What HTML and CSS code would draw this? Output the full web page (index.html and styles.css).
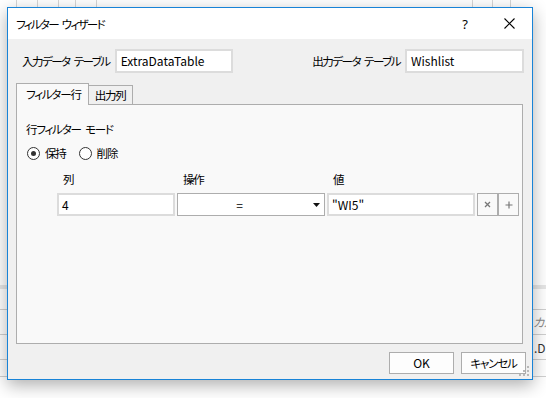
FILE: index.html
```html
<!DOCTYPE html>
<html lang="ja">
<head>
<meta charset="utf-8">
<title>フィルター ウィザード</title>
<link rel="stylesheet" href="styles.css">
</head>
<body>
<div class="desk">
  <div class="bg-clip bg-c1"><span class="bg-text bg-t1">カル</span></div>
  <div class="bg-clip bg-c2"><span class="bg-text bg-t2">.D</span></div>
  <div class="dialog">
    <div class="titlebar">
      <span class="title">フィルター ウィザード</span>
      <span class="tb-btn help">?</span>
      <span class="tb-btn close"><svg width="11" height="11" viewBox="0 0 11 11"><path d="M0.5 0.5 L10.5 10.5 M10.5 0.5 L0.5 10.5" stroke="#000" stroke-width="1.1" fill="none"/></svg></span>
    </div>
    <div class="tables">
      <div class="field">
        <span class="lbl">入力データ テーブル</span>
        <span class="textbox tb-in">ExtraDataTable</span>
      </div>
      <div class="field">
        <span class="lbl">出力データ テーブル</span>
        <span class="textbox tb-out">Wishlist</span>
      </div>
    </div>
    <div class="tabs">
      <div class="tab active">フィルター行</div>
      <div class="tab">出力列</div>
    </div>
    <div class="panel">
      <div class="mode">行フィルター モード</div>
      <div class="radios">
        <span class="radio checked"><span class="dot"></span></span><span class="rlbl">保持</span>
        <span class="radio"></span><span class="rlbl">削除</span>
      </div>
      <div class="grid">
        <span class="hdr">列</span>
        <span class="hdr">操作</span>
        <span class="hdr">値</span>
        <span></span><span></span>
        <span class="cell textbox">4</span>
        <span class="cell select"><span class="sel-val">=</span><svg class="arrow" width="7" height="4" viewBox="0 0 7 4"><path d="M0 0 H7 L3.5 4 Z" fill="#111"/></svg></span>
        <span class="cell textbox">"WI5"</span>
        <span class="cell sbtn"><svg width="7" height="7" viewBox="0 0 7 7"><path d="M1 1 L6 6 M6 1 L1 6" stroke="#777" stroke-width="1.3"/></svg></span>
        <span class="cell sbtn plus"><svg width="8" height="8" viewBox="0 0 8 8"><path d="M4 0.5 V7.5 M0.5 4 H7.5" stroke="#777" stroke-width="1.2"/></svg></span>
      </div>
    </div>
    <div class="buttons">
      <span class="btn latin">OK</span>
      <span class="btn">キャンセル</span>
    </div>
    <svg class="grip" width="12" height="12" viewBox="0 0 12 12">
      <g fill="#b8b8b8">
        <rect x="8" y="0" width="2" height="2"/>
        <rect x="4" y="4" width="2" height="2"/><rect x="8" y="4" width="2" height="2"/>
        <rect x="0" y="8" width="2" height="2"/><rect x="4" y="8" width="2" height="2"/><rect x="8" y="8" width="2" height="2"/>
      </g>
    </svg>
  </div>
</div>
</body>
</html>
```

FILE: styles.css
```css
* { box-sizing: border-box; }

html, body {
  margin: 0;
  padding: 0;
}

body {
  font-family: "Noto Sans CJK JP", "Noto Sans", sans-serif;
  font-size: 11.5px;
  letter-spacing: -1.2px;
  word-spacing: 3px;
  color: #000;
  font-feature-settings: "palt";
}

.latin,
.textbox {
  font-size: 12px;
  letter-spacing: 0;
  word-spacing: 0;
}

.desk {
  position: relative;
  width: 546px;
  height: 398px;
  overflow: hidden;
  padding: 7px 0 0 7px;
  background-color: #fff;
  background-image:
    linear-gradient(#d6d6d6, #d6d6d6),
    linear-gradient(#d6d6d6, #d6d6d6),
    linear-gradient(#d6d6d6, #d6d6d6),
    linear-gradient(#d6d6d6, #d6d6d6),
    linear-gradient(#d6d6d6, #d6d6d6),
    linear-gradient(#d6d6d6, #d6d6d6),
    linear-gradient(#d6d6d6, #d6d6d6),
    linear-gradient(#d6d6d6, #d6d6d6),
    linear-gradient(#e6e6e6, #e6e6e6),
    linear-gradient(#d0d0d0, #d0d0d0),
    linear-gradient(#d0d0d0, #d0d0d0),
    linear-gradient(#d0d0d0, #d0d0d0),
    linear-gradient(#d0d0d0, #d0d0d0);
  background-repeat: no-repeat;
  background-size:
    1px 8px, 1px 8px, 1px 8px, 1px 8px, 1px 8px, 1px 8px, 1px 8px, 1px 8px,
    100% 4px, 100% 1px, 100% 1px, 100% 1px, 100% 1px;
  background-position:
    16px 0, 37px 0, 58px 0, 75px 0, 96px 0, 472px 0, 492px 0, 510px 0,
    0 285px, 0 309px, 0 334px, 0 359px, 0 376px;
}

.bg-clip {
  position: absolute;
  left: 533px;
  width: 13px;
  height: 16px;
  overflow: hidden;
}
.bg-c1 { top: 314px; }
.bg-c2 { top: 340px; }

.bg-text {
  display: block;
  font-size: 12px;
  letter-spacing: 0;
  line-height: 16px;
  white-space: nowrap;
}
.bg-t1 { font-style: italic; color: #8a8a8a; }
.bg-t2 { color: #333; margin-left: 1px; }

.dialog {
  position: relative;
  width: 526px;
  height: 373px;
  border: 1px solid #1883d7;
  background: #f0f0f0;
  display: flex;
  flex-direction: column;
  box-shadow: 0 5px 16px rgba(0, 0, 0, 0.32);
}

.titlebar {
  height: 31px;
  flex: none;
  background: #fff;
  display: flex;
  align-items: center;
  padding-left: 8px;
}

.title {
  flex: 1;
  line-height: 16px;
  letter-spacing: -1.7px;
}

.tb-btn {
  width: 46px;
  height: 31px;
  display: flex;
  align-items: center;
  justify-content: center;
}

.help {
  font-family: "Noto Sans", sans-serif;
  font-size: 13px;
  letter-spacing: 0;
  padding-left: 4px;
}

.tables {
  display: flex;
  justify-content: space-between;
  align-items: center;
  padding: 10px 8px 0 14px;
  height: 34px;
  flex: none;
}

.field {
  display: flex;
  align-items: center;
  gap: 5px;
}

.lbl {
  line-height: 16px;
  white-space: nowrap;
  letter-spacing: -1.5px;
}

.textbox {
  height: 24px;
  background: #fff;
  border: 2px solid #dcdcdc;
  display: flex;
  align-items: center;
  padding-left: 4px;
  line-height: 16px;
  white-space: nowrap;
}

.tb-in { width: 118px; }
.tb-out { width: 119px; }

.tabs {
  display: flex;
  align-items: flex-end;
  height: 21px;
  margin-top: 10px;
  padding-left: 8px;
  flex: none;
  position: relative;
  z-index: 1;
}

.tab {
  height: 19px;
  border: 1px solid #adadad;
  border-bottom: none;
  background: #f0f0f0;
  padding: 0 6px;
  display: flex;
  align-items: center;
  line-height: 16px;
  white-space: nowrap;
}

.tab + .tab {
  border-left: none;
}

.tab.active {
  height: 22px;
  margin-bottom: -1px;
  background: #f9f9f9;
  padding: 2px 7px 0 9px;
  align-items: flex-start;
}

.panel {
  margin-left: 8px;
  width: 507px;
  height: 240px;
  flex: none;
  border: 1px solid #adadad;
  background: #f9f9f9;
  padding: 16px 0 0 9px;
}

.mode {
  line-height: 16px;
}

.radios {
  display: flex;
  align-items: center;
  margin-top: 8px;
  height: 16px;
  padding-left: 1px;
}

.radio {
  width: 13px;
  height: 13px;
  border: 1px solid #333;
  border-radius: 50%;
  background: #fff;
  display: flex;
  align-items: center;
  justify-content: center;
}

.dot {
  width: 5px;
  height: 5px;
  border-radius: 50%;
  background: #333;
}

.rlbl {
  margin-left: 5px;
  margin-right: 13px;
  line-height: 16px;
}

.grid {
  margin-top: 10px;
  margin-left: 31px;
  display: grid;
  grid-template-columns: 118px 148px 148px 21px 20px;
  grid-template-rows: 16px 23px;
  column-gap: 2px;
  row-gap: 6px;
}

.hdr {
  padding-left: 6px;
  line-height: 16px;
}

.cell {
  height: 23px;
}

.grid .textbox {
  height: 23px;
  padding-left: 3px;
}

.select {
  background: #fff;
  border: 1px solid #adadad;
  display: flex;
  align-items: center;
  letter-spacing: 0;
  font-size: 12px;
}

.sel-val {
  flex: 1;
  text-align: center;
  line-height: 16px;
  padding-right: 12px;
}

.arrow {
  margin-right: 4px;
}

.sbtn {
  background: #f9f9f9;
  border: 1px solid #adadad;
  display: flex;
  align-items: center;
  justify-content: center;
}

.sbtn.plus {
  margin-left: -2px;
  width: 21px;
}

.buttons {
  display: flex;
  justify-content: flex-end;
  gap: 7px;
  margin-top: 8px;
  padding-right: 6px;
}

.btn {
  width: 65px;
  height: 22px;
  background: #fdfdfd;
  border: 1px solid #adadad;
  display: flex;
  align-items: center;
  justify-content: center;
  line-height: 16px;
}

.grip {
  position: absolute;
  right: 1px;
  bottom: 1px;
}
```
